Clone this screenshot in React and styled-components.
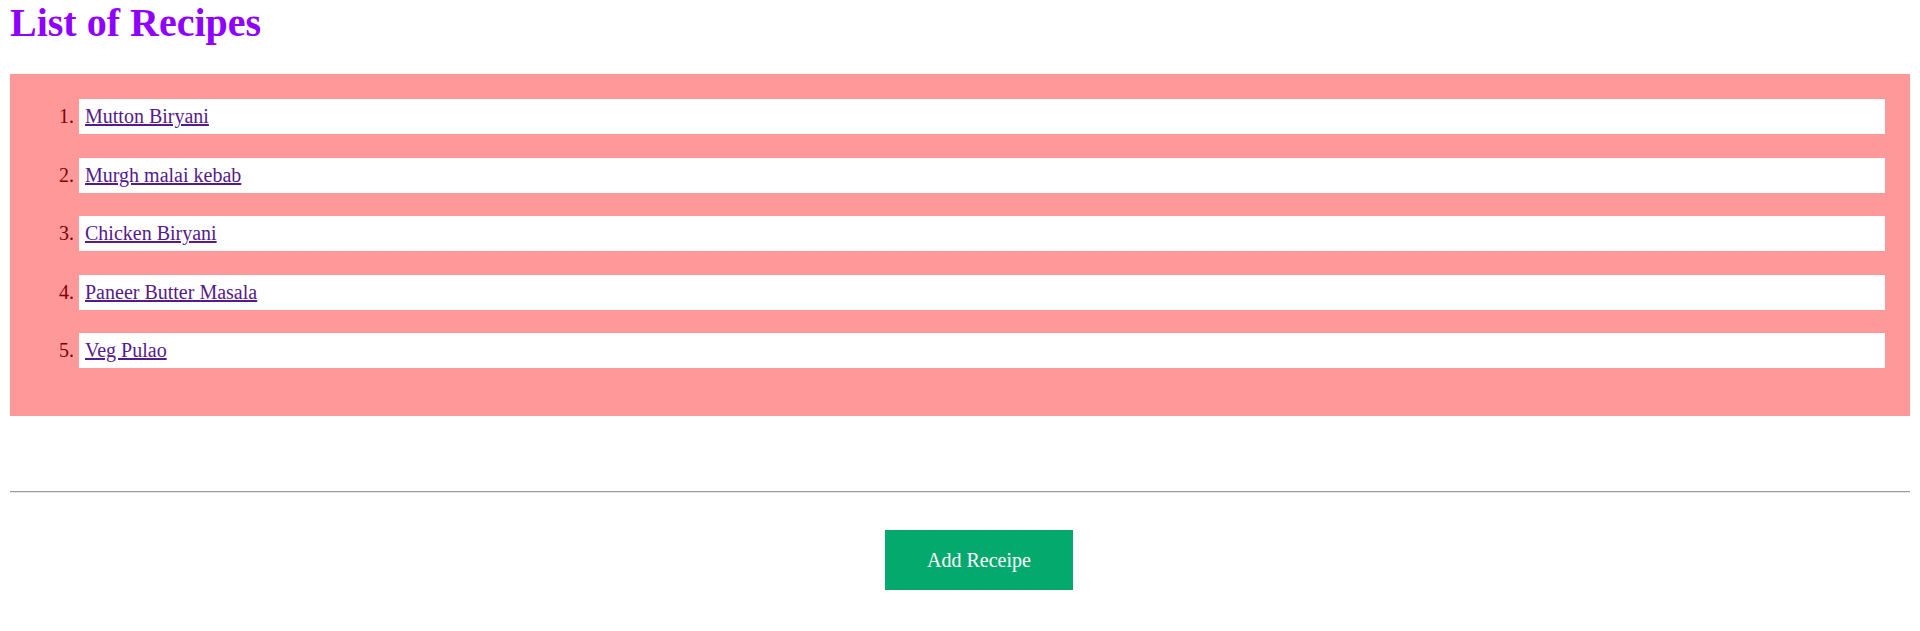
import React from "react";
import styled, { createGlobalStyle } from "styled-components";

const recipes = [
  "Mutton Biryani",
  "Murgh malai kebab",
  "Chicken Biryani",
  "Paneer Butter Masala",
  "Veg Pulao",
];

const App = () => {
  return (
    <Page>
      <GlobalStyle />
      <Title>List of Recipes</Title>
      <RecipeBox>
        <RecipeList>
          {recipes.map((name) => (
            <RecipeItem key={name}>
              <RecipeLink href="#">{name}</RecipeLink>
            </RecipeItem>
          ))}
        </RecipeList>
      </RecipeBox>
      <Divider />
      <Actions>
        <AddButton>Add Receipe</AddButton>
      </Actions>
    </Page>
  );
};

const GlobalStyle = createGlobalStyle({
  body: {
    margin: 0,
    background: "#ffffff",
    fontFamily: '"Liberation Serif", "Times New Roman", serif',
  },
});

const Page = styled.div({
  padding: "0 10px",
});

const Title = styled.h1({
  margin: "0 0 28px 0",
  fontSize: "40px",
  lineHeight: "46px",
  fontWeight: "bold",
  color: "#8f00ff",
});

const RecipeBox = styled.div({
  background: "#ff9999",
  padding: "25px 25px 48px 69px",
});

const RecipeList = styled.ol({
  margin: 0,
  padding: 0,
  listStyle: "decimal outside",
  color: "#800000",
  fontSize: "20px",
  display: "flex",
  flexDirection: "column",
  gap: "23.5px",
});

const RecipeItem = styled.li({
  background: "#ffffff",
  padding: "6px 6px",
  lineHeight: "23px",
});

const RecipeLink = styled.a({
  color: "#551a8b",
  textDecoration: "underline",
});

const Divider = styled.hr({
  margin: "75px 0 0 0",
  border: "none",
  borderTop: "1px solid #9a9a9a",
  borderBottom: "1px solid #e6e6e6",
});

const Actions = styled.div({
  display: "flex",
  justifyContent: "center",
  paddingTop: "37px",
});

const AddButton = styled.button({
  marginLeft: "38px",
  background: "#04aa6d",
  color: "#ffffff",
  border: "none",
  padding: "18px 42px",
  fontFamily: '"Liberation Serif", "Times New Roman", serif',
  fontSize: "20px",
  lineHeight: "24px",
  cursor: "pointer",
});

export default App;
